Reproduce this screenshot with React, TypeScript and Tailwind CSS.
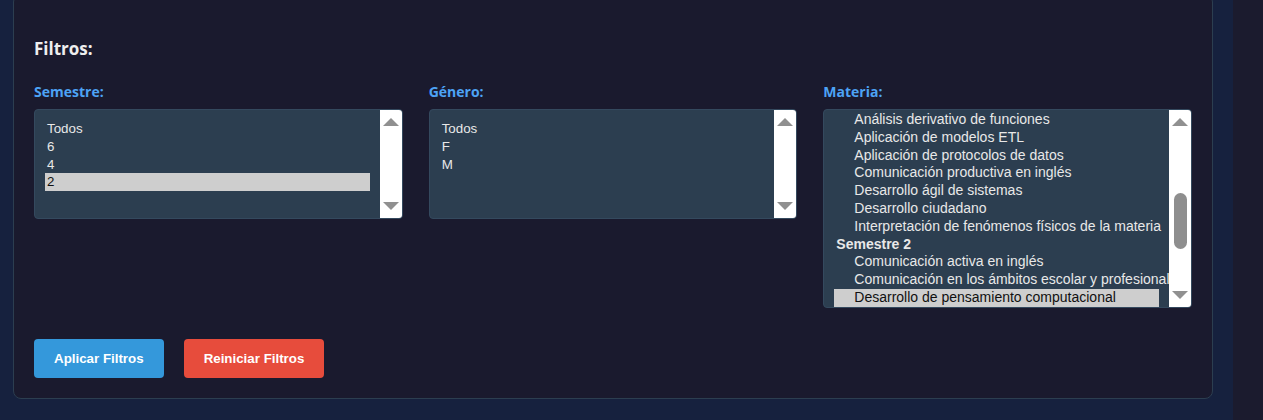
import React from 'react'

type Row = { label: string; group?: boolean; indent?: boolean; selected?: boolean }

const semestres: Row[] = [
  { label: 'Todos' },
  { label: '6' },
  { label: '4' },
  { label: '2', selected: true },
]

const generos: Row[] = [{ label: 'Todos' }, { label: 'F' }, { label: 'M' }]

const materias: Row[] = [
  { label: 'Análisis derivativo de funciones', indent: true },
  { label: 'Aplicación de modelos ETL', indent: true },
  { label: 'Aplicación de protocolos de datos', indent: true },
  { label: 'Comunicación productiva en inglés', indent: true },
  { label: 'Desarrollo ágil de sistemas', indent: true },
  { label: 'Desarrollo ciudadano', indent: true },
  { label: 'Interpretación de fenómenos físicos de la materia', indent: true },
  { label: 'Semestre 2', group: true },
  { label: 'Comunicación activa en inglés', indent: true },
  { label: 'Comunicación en los ámbitos escolar y profesional', indent: true },
  { label: 'Desarrollo de pensamiento computacional', indent: true, selected: true },
]

function Scrollbar({ thumb }: { thumb?: boolean }) {
  return (
    <div className="w-[22px] shrink-0 bg-white flex flex-col items-center justify-between py-[8px] relative">
      <svg width="16" height="8" viewBox="0 0 16 8">
        <polygon points="8,0 16,8 0,8" fill="#909090" />
      </svg>
      {thumb && (
        <div className="absolute left-[5px] top-[83px] w-[13px] h-[56px] rounded-full bg-[#8e8e8e]" />
      )}
      <svg width="16" height="8" viewBox="0 0 16 8">
        <polygon points="0,0 16,0 8,8" fill="#909090" />
      </svg>
    </div>
  )
}

function ListBox({ rows, height, scrolled }: { rows: Row[]; height: string; scrolled?: boolean }) {
  return (
    <div className={`flex ${height} border border-[#34495e] rounded-[4px] bg-[#2c3e50] overflow-hidden`}>
      <div className={`flex-1 min-w-0 overflow-hidden px-[10px] ${scrolled ? 'pt-[1px]' : 'pt-[10px]'}`}>
        {rows.map((r, i) => (
          <div
            key={i}
            className={`h-[17.8px] leading-[17.8px] whitespace-nowrap ${scrolled ? 'text-[14px]' : 'text-[13.33px]'} ${
              r.selected ? 'bg-[#cecece] text-[#111]' : 'text-[#e8e8e8]'
            } ${r.group ? 'font-bold pl-[2px]' : r.indent ? 'pl-[20px]' : 'pl-[2px]'}`}
            style={{ fontFamily: '"Liberation Sans", Arial, sans-serif' }}
          >
            {r.label}
          </div>
        ))}
      </div>
      <Scrollbar thumb={scrolled} />
    </div>
  )
}

export default function App() {
  const heading = { fontFamily: '"Open Sans", "Noto Sans", sans-serif' }

  return (
    <div className="min-h-screen bg-[#16213e] flex">
      <div className="ml-[13px] -mt-[6px] mb-[21px] w-[1200px] bg-[#1a1a2e] border border-[#2c3e50] rounded-[8px] px-[20px] pt-[44px] pb-[18px]">
        <h3 className="text-[17px] leading-[20px] font-bold text-[#eeeeee]" style={heading}>
          Filtros:
        </h3>

        <div className="grid grid-cols-3 gap-[26px] mt-[23px]">
          <div>
            <label className="block text-[14px] leading-[20px] font-bold text-[#4da3f5] mb-[7px]" style={heading}>
              Semestre:
            </label>
            <ListBox rows={semestres} height="h-[110px]" />
          </div>
          <div>
            <label className="block text-[14px] leading-[20px] font-bold text-[#4da3f5] mb-[7px]" style={heading}>
              Género:
            </label>
            <ListBox rows={generos} height="h-[110px]" />
          </div>
          <div>
            <label className="block text-[14px] leading-[20px] font-bold text-[#4da3f5] mb-[7px]" style={heading}>
              Materia:
            </label>
            <ListBox rows={materias} height="h-[199px]" scrolled />
          </div>
        </div>

        <div
          className="flex gap-[20px] mt-[31px] text-[13.33px] font-bold text-white"
          style={{ fontFamily: '"Liberation Sans", Arial, sans-serif' }}
        >
          <button className="bg-[#3498db] rounded-[4px] px-[20px] h-[39px]">Aplicar Filtros</button>
          <button className="bg-[#e74c3c] rounded-[4px] px-[20px] h-[39px]">Reiniciar Filtros</button>
        </div>
      </div>
      <div className="ml-auto w-[30px] bg-[#1b1b2e]" />
    </div>
  )
}
